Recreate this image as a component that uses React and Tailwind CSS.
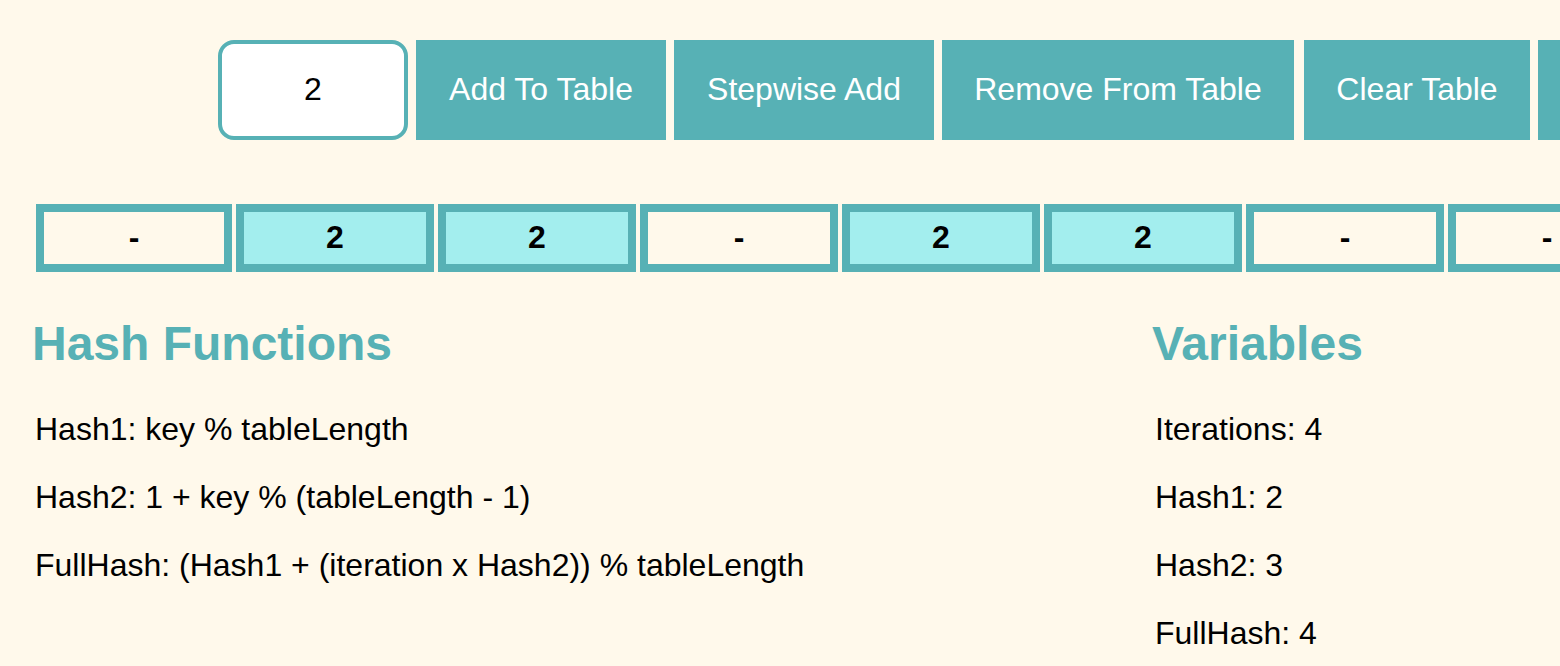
const actions = [
  { label: "Add To Table", width: "w-[250px]" },
  { label: "Stepwise Add", width: "w-[260px]" },
  { label: "Remove From Table", width: "w-[352px] mr-0.5" },
  { label: "Clear Table", width: "w-[226px]" },
];

const slots = [null, 2, 2, null, 2, 2, null, null];

const hashFunctions = [
  "Hash1: key % tableLength",
  "Hash2: 1 + key % (tableLength - 1)",
  "FullHash: (Hash1 + (iteration x Hash2)) % tableLength",
];

const variables = ["Iterations: 4", "Hash1: 2", "Hash2: 3", "FullHash: 4"];

function Section({ title, lines, className }) {
  return (
    <section className={className}>
      <h2 className="text-[48px] leading-[56px] font-bold text-[#57b1b5]">{title}</h2>
      <div className="mt-[39px] flex flex-col gap-8 pl-[3px]">
        {lines.map((line) => (
          <p key={line} className="text-[32px] leading-9 whitespace-nowrap">{line}</p>
        ))}
      </div>
    </section>
  );
}

export default function App() {
  return (
    <main className="min-h-screen overflow-hidden bg-[#fff9eb] pt-10 font-['Liberation_Sans',Arial,sans-serif] text-black">
      <form className="flex gap-2 pl-[218px]" onSubmit={(e) => e.preventDefault()}>
        <input
          aria-label="Key"
          defaultValue="2"
          className="h-[100px] w-[190px] shrink-0 rounded-2xl border-4 border-[#57b1b5] bg-white pb-0.5 text-center text-[32px] outline-none"
        />
        {actions.map((action) => (
          <button
            key={action.label}
            type="button"
            className={`h-[100px] shrink-0 bg-[#57b1b5] pb-0.5 text-[32px] whitespace-nowrap text-white ${action.width}`}
          >
            {action.label}
          </button>
        ))}
        <button type="button" aria-label="More" className="h-[100px] w-[250px] shrink-0 bg-[#57b1b5]" />
      </form>

      <table className="mt-[60px] ml-8 w-[1618px] table-fixed border-separate border-spacing-1">
        <tbody>
          <tr>
            {slots.map((slot, i) => (
              <td
                key={i}
                className={`h-[68px] border-8 border-[#57b1b5] p-0 pb-0.5 text-center text-[32px] leading-9 font-bold first:w-[196px] ${slot === null ? "" : "bg-[#a3eeee]"}`}
              >
                {slot ?? "-"}
              </td>
            ))}
          </tr>
        </tbody>
      </table>

      <div className="mt-10 flex pl-8">
        <Section title="Hash Functions" lines={hashFunctions} className="w-[1120px] shrink-0" />
        <Section title="Variables" lines={variables} className="grow" />
      </div>
    </main>
  );
}
